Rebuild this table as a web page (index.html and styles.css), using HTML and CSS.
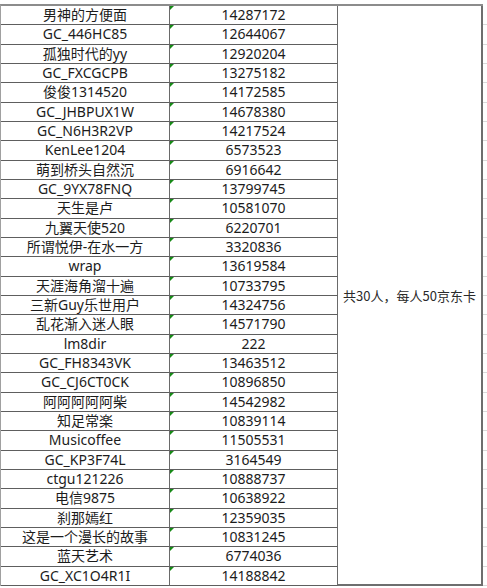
FILE: index.html
```html
<!DOCTYPE html>
<html lang="zh">
<head>
<meta charset="utf-8">
<link rel="stylesheet" href="styles.css">
</head>
<body>
<div class="sheet">
  <div class="grid">
    <div class="c1">男神的方便面</div><div class="c2">14287172</div>
    <div class="c3">共30人，每人50京东卡</div>
    <div class="c1">GC_446HC85</div><div class="c2">12644067</div>
    <div class="c1">孤独时代的yy</div><div class="c2">12920204</div>
    <div class="c1">GC_FXCGCPB</div><div class="c2">13275182</div>
    <div class="c1">俊俊1314520</div><div class="c2">14172585</div>
    <div class="c1">GC_JHBPUX1W</div><div class="c2">14678380</div>
    <div class="c1">GC_N6H3R2VP</div><div class="c2">14217524</div>
    <div class="c1">KenLee1204</div><div class="c2">6573523</div>
    <div class="c1">萌到桥头自然沉</div><div class="c2">6916642</div>
    <div class="c1">GC_9YX78FNQ</div><div class="c2">13799745</div>
    <div class="c1">天生是卢</div><div class="c2">10581070</div>
    <div class="c1">九翼天使520</div><div class="c2">6220701</div>
    <div class="c1">所谓悦伊-在水一方</div><div class="c2">3320836</div>
    <div class="c1">wrap</div><div class="c2">13619584</div>
    <div class="c1">天涯海角溜十遍</div><div class="c2">10733795</div>
    <div class="c1">三新Guy乐世用户</div><div class="c2">14324756</div>
    <div class="c1">乱花渐入迷人眼</div><div class="c2">14571790</div>
    <div class="c1">lm8dir</div><div class="c2">222</div>
    <div class="c1">GC_FH8343VK</div><div class="c2">13463512</div>
    <div class="c1">GC_CJ6CT0CK</div><div class="c2">10896850</div>
    <div class="c1">阿阿阿阿阿柴</div><div class="c2">14542982</div>
    <div class="c1">知足常楽</div><div class="c2">10839114</div>
    <div class="c1">Musicoffee</div><div class="c2">11505531</div>
    <div class="c1">GC_KP3F74L</div><div class="c2">3164549</div>
    <div class="c1">ctgu121226</div><div class="c2">10888737</div>
    <div class="c1">电信9875</div><div class="c2">10638922</div>
    <div class="c1">刹那嫣红</div><div class="c2">12359035</div>
    <div class="c1">这是一个漫长的故事</div><div class="c2">10831245</div>
    <div class="c1">蓝天艺术</div><div class="c2">6774036</div>
    <div class="c1">GC_XC1O4R1I</div><div class="c2">14188842</div>
  </div>
</div>
</body>
</html>
```
FILE: styles.css
```css
html, body {
  margin: 0;
  padding: 0;
  background: #ffffff;
}

.sheet {
  width: 487px;
  height: 588px;
  padding-top: 4px;
  box-sizing: border-box;
  background:
    repeating-linear-gradient(to bottom, transparent 0, transparent 18.33px, #dadada 18.33px, #dadada 19.33px) 0 6px / 100% 100% no-repeat;
}

.grid {
  display: grid;
  grid-template-columns: 169px 168px 145px;
  grid-template-rows: repeat(30, 19.333px);
  width: max-content;
  border-top: 2px solid #8c8c8c;
  border-left: 1px solid #a0a0a0;
  background: #ffffff;
  font-family: "Noto Sans", "Noto Sans CJK SC", sans-serif;
  font-size: 14px;
  color: #1c1c1c;
}

.c1, .c2 {
  box-sizing: border-box;
  border-bottom: 1px solid #5e5e5e;
  border-right: 1px solid #6a6a6a;
  display: flex;
  align-items: center;
  justify-content: center;
  line-height: 1;
  white-space: nowrap;
  overflow: hidden;
}

.c1 {
  grid-column: 1;
}

.c2 {
  grid-column: 2;
  position: relative;
}

.c2::before {
  content: "";
  position: absolute;
  left: 0;
  top: 0;
  width: 0;
  height: 0;
  border-top: 4px solid #168a16;
  border-right: 4px solid transparent;
}

.c3 {
  grid-column: 3;
  grid-row: 1 / span 30;
  box-sizing: border-box;
  border-right: 2px solid #6e6e6e;
  border-bottom: 2px solid #6e6e6e;
  display: flex;
  align-items: center;
  justify-content: center;
  font-family: "Noto Sans CJK SC", sans-serif;
  font-size: 13px;
  color: #2a2a2a;
  white-space: nowrap;
  padding-top: 2px;
}
```
